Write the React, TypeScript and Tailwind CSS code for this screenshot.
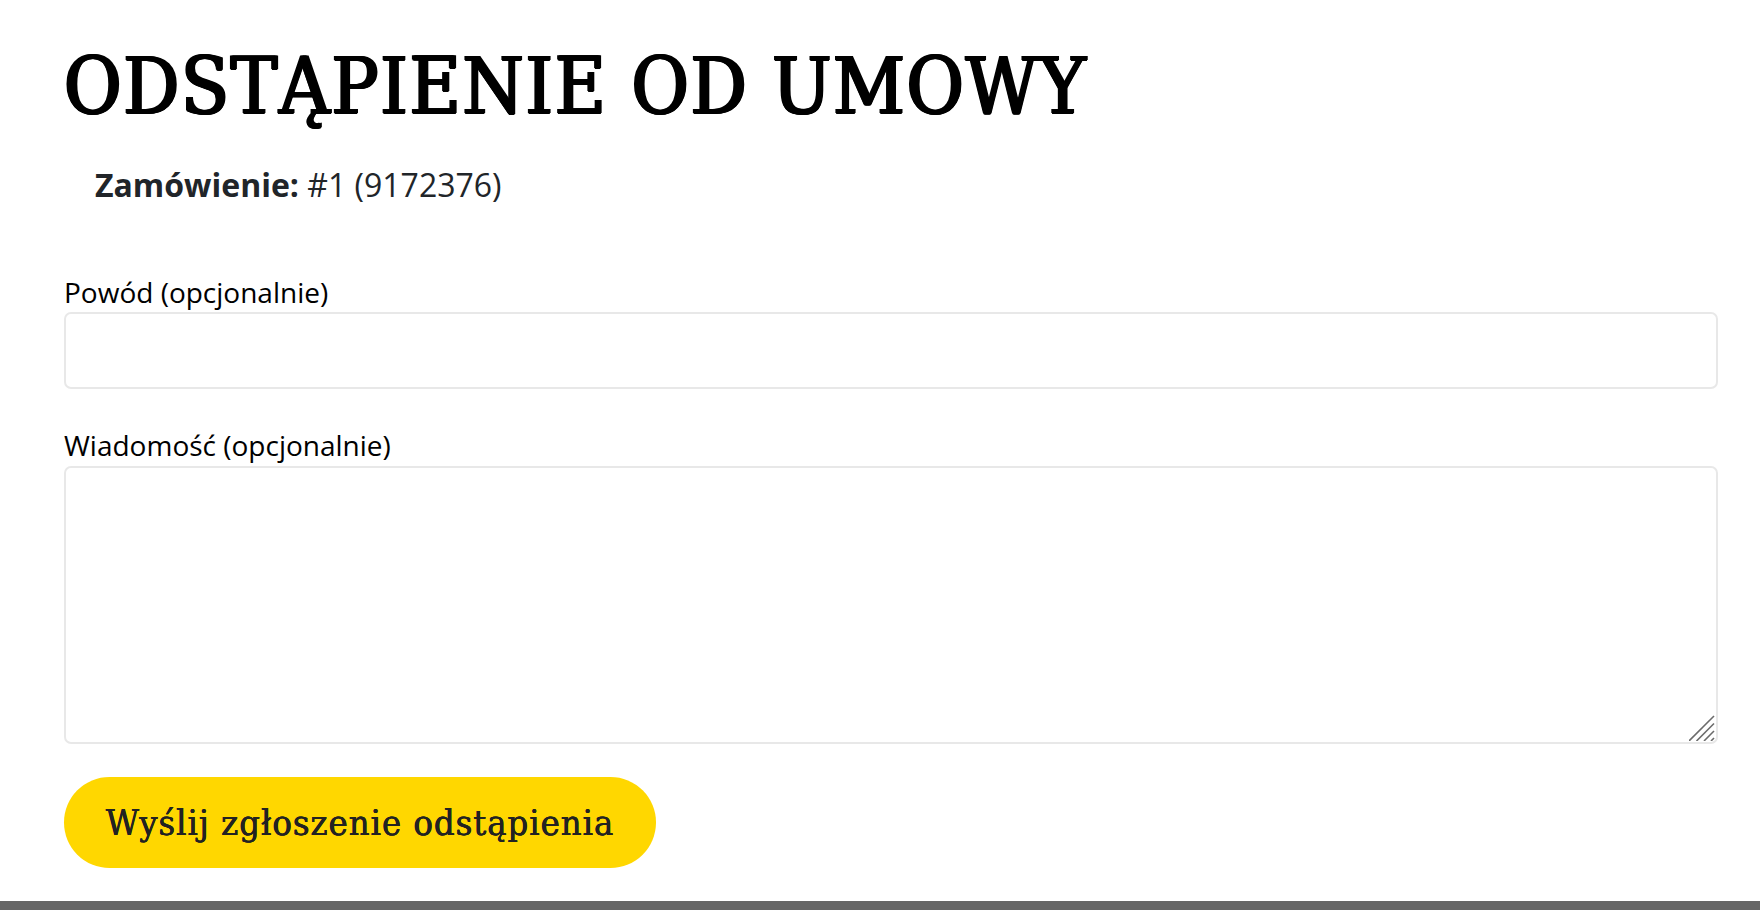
const slab = '"DejaVu Serif Condensed", "DejaVu Serif", serif';

function ResizeGrip() {
  return (
    <svg
      className="pointer-events-none absolute right-[3px] bottom-[3px]"
      width="26"
      height="26"
      viewBox="0 0 26 26"
      fill="none"
      stroke="#6b6b6b"
      strokeWidth="1.6"
    >
      <path d="M0 26 L25 1" />
      <path d="M7.5 26 L25 8.5" />
      <path d="M15 26 L25 16" />
      <path d="M22 26 L25 23" />
    </svg>
  );
}

export default function App() {
  return (
    <div className="min-h-[910px] flex flex-col bg-white" style={{ fontFamily: '"Open Sans", sans-serif' }}>
      <main className="flex-1 pl-[64px] pr-[42px]">
        <h1
          className="pt-[38px] text-[78px] leading-[96px] font-normal text-black tracking-[1.6px] [text-shadow:1.4px_0_0_#000,-1.4px_0_0_#000,0_0.8px_0_#000,0.7px_0.5px_0_#000,-0.7px_0.5px_0_#000]"
          style={{ fontFamily: slab }}
        >
          ODSTĄPIENIE OD UMOWY
        </h1>

        <p className="mt-[29px] pl-[31px] text-[32px] leading-[44px] text-[#212529]">
          <span className="font-bold">Zamówienie:</span> #1 (9172376)
        </p>

        <form className="mt-[66px] flex flex-col">
          <label className="text-[28px] leading-[38px] text-black">Powód (opcjonalnie)</label>
          <input
            type="text"
            className="mt-[1px] h-[77px] w-full rounded-[7px] border-2 border-[#e8e8e8] bg-white px-3 outline-none"
          />

          <label className="mt-[37px] text-[28px] leading-[38px] text-black">Wiadomość (opcjonalnie)</label>
          <div className="relative mt-[2px]">
            <textarea className="block h-[278px] w-full resize-none rounded-[7px] border-2 border-[#e8e8e8] bg-white px-3 py-2 outline-none" />
            <ResizeGrip />
          </div>

          <div className="mt-[33px]">
            <button
              type="button"
              className="h-[91px] w-[592px] rounded-full bg-[#ffd700] text-[36px] tracking-[1px] text-[#222] [text-shadow:0.3px_0_0_#222,-0.3px_0_0_#222]"
              style={{ fontFamily: slab }}
            >
              Wyślij zgłoszenie odstąpienia
            </button>
          </div>
        </form>
      </main>
      <footer className="h-[9px] bg-[#666]" />
    </div>
  );
}
